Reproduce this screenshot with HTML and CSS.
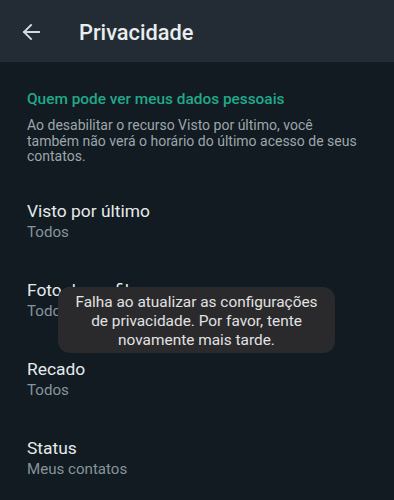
FILE: index.html
```html
<!DOCTYPE html>
<html lang="pt-BR">
<head>
<meta charset="utf-8">
<title>Privacidade</title>
<link rel="stylesheet" href="styles.css">
</head>
<body>
<div class="screen">
  <header class="appbar">
    <span class="back" aria-label="Voltar">
      <svg width="20" height="20" viewBox="0 0 20 20"><path d="M18 10H3M10 3L3 10L10 17" fill="none" stroke="#d4d9dc" stroke-width="1.9" stroke-linecap="square" stroke-linejoin="miter"/></svg>
    </span>
    <h1 class="title">Privacidade</h1>
  </header>
  <main class="content">
    <section class="intro">
      <h2 class="section-title">Quem pode ver meus dados pessoais</h2>
      <p class="section-desc">Ao desabilitar o recurso Visto por último, você também não verá o horário do último acesso de seus contatos.</p>
    </section>
    <ul class="list">
      <li class="item"><span class="item-title">Visto por último</span><span class="item-sub">Todos</span></li>
      <li class="item"><span class="item-title">Foto do perfil</span><span class="item-sub">Todos</span></li>
      <li class="item"><span class="item-title">Recado</span><span class="item-sub">Todos</span></li>
      <li class="item"><span class="item-title">Status</span><span class="item-sub">Meus contatos</span></li>
    </ul>
  </main>
  <div class="toast">Falha ao atualizar as configurações<br>de privacidade. Por favor, tente<br>novamente mais tarde.</div>
</div>
</body>
</html>
```

FILE: styles.css
```css
* { box-sizing: border-box; }
html, body {
  margin: 0;
  padding: 0;
  background: #111b21;
  font-family: Roboto, "Noto Sans", "Liberation Sans", sans-serif;
}
.screen {
  position: relative;
  width: 394px;
  height: 500px;
  overflow: hidden;
  background: #111b21;
}
.appbar {
  height: 62px;
  background: #232c34;
  display: flex;
  align-items: center;
  padding-left: 21px;
}
.back {
  display: flex;
  width: 20px;
  height: 20px;
  margin-top: 2px;
}
.title {
  margin: 4px 0 0 38px;
  font-size: 21.8px;
  font-weight: 500;
  color: #e9edef;
  line-height: 26px;
}
.content { padding: 0; }
.intro {
  padding: 28px 27px 17px;
}
.section-title {
  margin: 0;
  font-size: 15.4px;
  font-weight: 500;
  line-height: 18px;
  color: #22a88a;
}
.section-desc {
  margin: 10px 0 0;
  font-size: 14px;
  line-height: 15.6px;
  color: #9ea6ab;
}
.list {
  list-style: none;
  margin: 0;
  padding: 0;
}
.item {
  display: flex;
  flex-direction: column;
  padding: 18px 27px 19px;
}
.item-title {
  font-size: 17.4px;
  line-height: 22px;
  color: #e6eaec;
}
.item-sub {
  font-size: 15.1px;
  line-height: 20px;
  color: #87949c;
}
.toast {
  position: absolute;
  left: 58px;
  top: 287px;
  width: 277px;
  height: 66px;
  padding: 6px 2px 0;
  border-radius: 12px;
  background: #2a2a2c;
  color: #e2e2e2;
  font-size: 15.4px;
  line-height: 19px;
  text-align: center;
  white-space: nowrap;
}
```
